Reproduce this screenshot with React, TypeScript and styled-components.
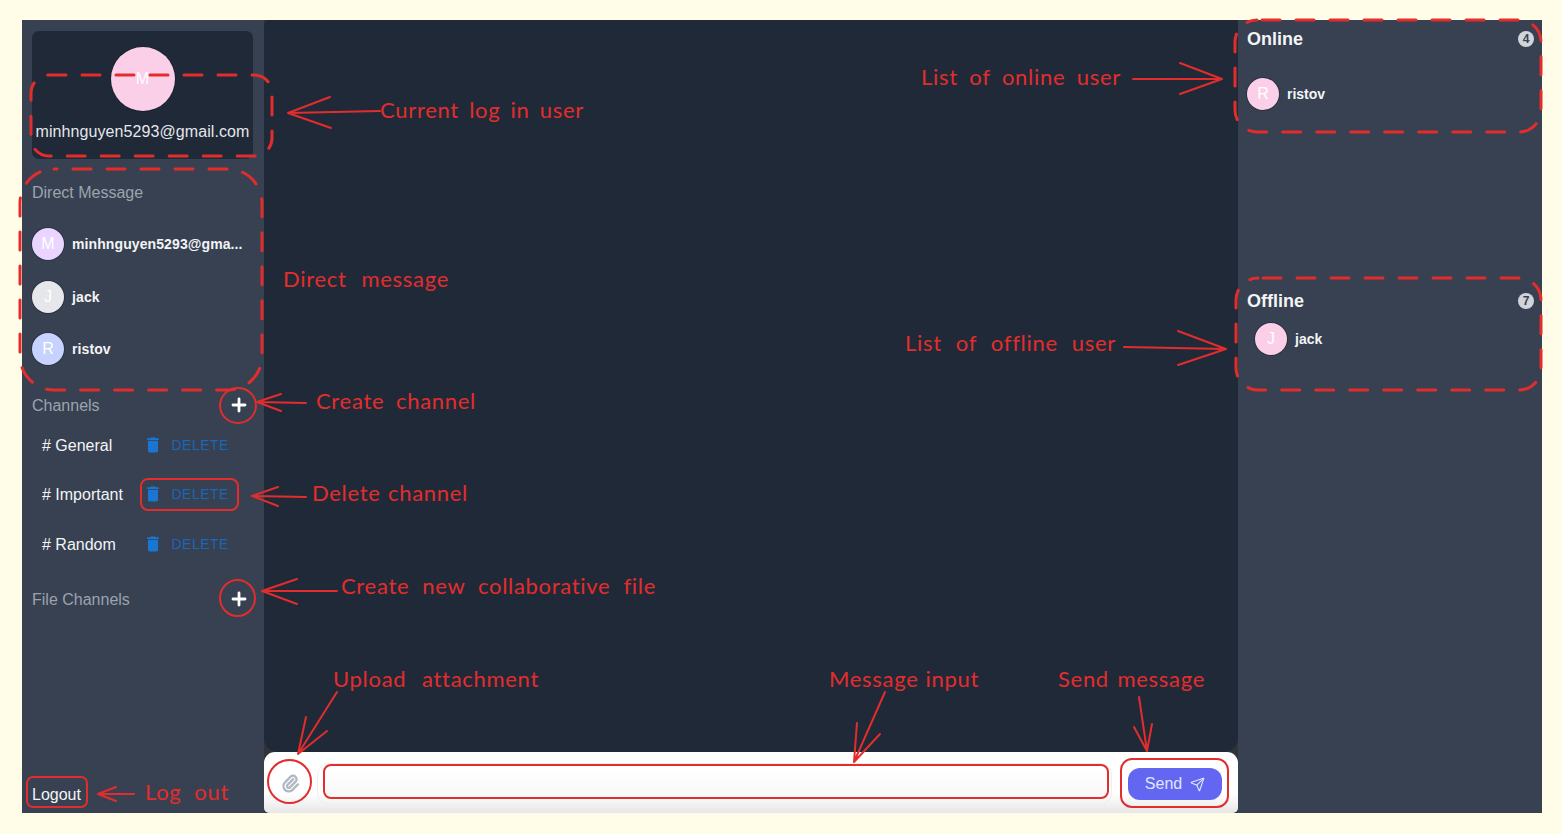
import React from "react";
import styled, { createGlobalStyle } from "styled-components";
import { HiOutlinePaperClip } from "react-icons/hi";
import { Send as SendIcon } from "lucide-react";

const Global = createGlobalStyle`
  html, body { margin: 0; padding: 0; background: #fffde8; }
  * { box-sizing: border-box; }
`;

const Page = styled.div`
  position: relative;
  width: 1562px;
  height: 834px;
  padding: 20px 20px 21px 22px;
  overflow: hidden;
  font-family: "Liberation Sans", Arial, sans-serif;
  background: #fffde8;
`;

const Shell = styled.div`
  display: grid;
  grid-template-columns: 242px 974px 304px;
  height: 793px;
  background: #374151;
`;

const Sidebar = styled.aside`
  display: flex;
  flex-direction: column;
  padding: 11px 11px 6px 10px;
  background: #374151;
`;

const ProfileCard = styled.div`
  display: flex;
  flex-direction: column;
  align-items: center;
  height: 128px;
  padding-top: 16px;
  border-radius: 7px;
  background: #1f2937;
`;

const Avatar = styled.div<{ $color: string; $size?: number }>`
  display: flex;
  align-items: center;
  justify-content: center;
  flex: none;
  width: ${(p) => p.$size ?? 32}px;
  height: ${(p) => p.$size ?? 32}px;
  border-radius: 50%;
  background: ${(p) => p.$color};
  color: #fff;
  font-size: 16px;
  font-weight: 400;
  box-shadow: 0 0 0 1px rgba(17, 24, 39, 0.35);
`;

const Email = styled.div`
  margin-top: 9px;
  color: #e5e7eb;
  font-size: 16px;
  line-height: 24px;
  letter-spacing: 0.08px;
  white-space: nowrap;
`;

const SectionLabel = styled.div`
  color: #9ca3af;
  font-size: 16px;
  line-height: 24px;
  transform: translateY(1px);
`;

const DirectLabel = styled(SectionLabel)`
  margin-top: 21px;
`;

const DirectList = styled.div`
  display: flex;
  flex-direction: column;
  margin-top: 14px;
`;

const UserRow = styled.div<{ $indent?: number }>`
  display: flex;
  align-items: center;
  gap: 8px;
  min-height: 32px;
  padding-left: ${(p) => p.$indent ?? 0}px;
  color: #f3f4f6;
  font-size: 14px;
  font-weight: 700;
`;

const DirectRow = styled(UserRow)`
  height: 52.5px;
`;

const UserName = styled.span`
  letter-spacing: 0.1px;
  white-space: nowrap;
`;

const GroupHeader = styled.div<{ $top: number }>`
  display: flex;
  align-items: center;
  justify-content: space-between;
  height: 30px;
  margin-top: ${(p) => p.$top}px;
`;

const AddButton = styled.button`
  display: flex;
  align-items: center;
  justify-content: center;
  width: 28px;
  height: 28px;
  padding: 0;
  border: 0;
  background: transparent;
`;

const ChannelList = styled.div`
  display: flex;
  flex-direction: column;
`;

const ChannelRow = styled.div`
  display: grid;
  grid-template-columns: 100.5px auto;
  align-items: center;
  height: 49.5px;
  padding-left: 10px;
  color: #f3f4f6;
  font-size: 16px;
`;

const ChannelName = styled.span`
  transform: translateY(1px);
`;

const DeleteButton = styled.button`
  display: flex;
  align-items: center;
  gap: 9px;
  width: fit-content;
  padding: 0;
  border: 0;
  background: transparent;
  color: #1976d2;
  font-family: inherit;
  font-size: 14px;
  letter-spacing: 0.5px;
`;

const DeleteText = styled.span`
  color: #1a66b8;
`;

const Logout = styled.button`
  align-self: flex-start;
  margin-top: auto;
  padding: 0;
  border: 0;
  background: transparent;
  color: #f3f4f6;
  font-family: inherit;
  font-size: 16px;
  line-height: 24px;
`;

const Center = styled.main`
  display: flex;
  flex-direction: column;
  background: #30343a;
`;

const Messages = styled.div`
  flex: 1;
  border-radius: 5px 0 14px 14px;
  background: #1f2937;
`;

const Composer = styled.form`
  display: flex;
  align-items: center;
  height: 61px;
  padding: 0 10px 0 8px;
  border-radius: 11px 11px 5px 5px;
  background: linear-gradient(#ffffff 68%, #e7e7e7);
`;

const AttachButton = styled.button`
  display: flex;
  align-items: center;
  justify-content: center;
  flex: none;
  width: 36px;
  height: 36px;
  margin-top: 2px;
  padding: 0;
  border: 0;
  background: transparent;
  color: #b1b7c3;
`;

const Field = styled.div`
  flex: 1;
  height: 42px;
  margin: 3px 0 0 9px;
  padding: 5px 5px 5px 8px;
  border: 1px solid #eeeeee;
  border-radius: 12px;
`;

const MessageInput = styled.input`
  display: block;
  width: 100%;
  height: 30px;
  border: 0;
  outline: 0;
  background: linear-gradient(#ffffff, #f7f7f7);
`;

const SendButton = styled.button`
  display: flex;
  align-items: center;
  justify-content: center;
  gap: 8px;
  flex: none;
  width: 94px;
  height: 32px;
  margin: 3px 6px 0 16px;
  padding: 0;
  border: 0;
  border-radius: 12px;
  background: #6366f1;
  color: #e0e7ff;
  font-family: inherit;
  font-size: 16px;
`;

const RightPanel = styled.aside`
  display: flex;
  flex-direction: column;
  padding: 5px 8px 0 9px;
  background: #374151;
`;

const PanelHeader = styled.div<{ $top?: number }>`
  display: flex;
  align-items: center;
  justify-content: space-between;
  height: 28px;
  margin-top: ${(p) => p.$top ?? 0}px;
  color: #f3f4f6;
  font-size: 18px;
  font-weight: 700;
`;

const CountBadge = styled.span`
  display: flex;
  align-items: center;
  justify-content: center;
  width: 16px;
  height: 16px;
  border-radius: 50%;
  background: #d1d5db;
  color: #374151;
  font-size: 12px;
  font-weight: 700;
`;

const PanelList = styled.div<{ $top: number }>`
  margin-top: ${(p) => p.$top}px;
`;

const Overlay = styled.div`
  position: absolute;
  inset: 0;
  pointer-events: none;
`;

const Sketch = styled.svg`
  display: block;
  fill: none;
  stroke: #e32d2d;
  stroke-linecap: round;
  stroke-linejoin: round;
`;

const Note = styled.span<{ $x: number; $y: number; $w: number }>`
  position: absolute;
  left: ${(p) => p.$x}px;
  top: ${(p) => p.$y - 15}px;
  width: ${(p) => p.$w}px;
  height: 28px;
  color: #e32d2d;
  font-family: Lato, "Liberation Sans", sans-serif;
  font-size: 22px;
  font-weight: 400;
  line-height: 28px;
  letter-spacing: 0.7px;
  white-space: nowrap;
  text-align: justify;
  text-align-last: justify;
`;

const Plus = () => (
  <svg width="16" height="16" viewBox="0 0 16 16" aria-hidden="true">
    <path d="M8 2v12M2 8h12" stroke="#fff" strokeWidth="2.8" strokeLinecap="round" />
  </svg>
);

const Trash = () => (
  <svg width="20" height="20" viewBox="0 0 24 24" fill="currentColor" aria-hidden="true">
    <path d="M6 19c0 1.1.9 2 2 2h8c1.1 0 2-.9 2-2V7H6v12zM19 4h-3.5l-1-1h-5l-1 1H5v2h14V4z" />
  </svg>
);

const directUsers = [
  { name: "minhnguyen5293@gma...", initial: "M", color: "#e9d5ff" },
  { name: "jack", initial: "J", color: "#e5e7eb" },
  { name: "ristov", initial: "R", color: "#c7d2fe" },
];

const channels = ["General", "Important", "Random"];

const notes = [
  { text: "Current log in user", x: 380, y: 111, w: 204 },
  { text: "Direct message", x: 283, y: 280, w: 166 },
  { text: "Create channel", x: 316, y: 402, w: 160 },
  { text: "Delete channel", x: 312, y: 494, w: 156 },
  { text: "Create new collaborative file", x: 341, y: 587, w: 315 },
  { text: "Upload attachment", x: 333, y: 680, w: 206 },
  { text: "Log out", x: 145, y: 793, w: 84 },
  { text: "List of online user", x: 921, y: 78, w: 200 },
  { text: "List of offline user", x: 905, y: 344, w: 211 },
  { text: "Message input", x: 829, y: 680, w: 150 },
  { text: "Send message", x: 1058, y: 680, w: 147 },
];

const arrows = [
  "M380 111 L288 113 M330 97 L288 113 L331 128",
  "M306 403 L257 402 M281 394 L257 402 L281 411",
  "M306 497 L252 496 M278 487 L252 496 L278 506",
  "M337 591 L262 591 M297 579 L262 591 L297 604",
  "M134 794 L98 794 M116 787 L98 794 L116 801",
  "M337 692 L298 754 M306 717 L298 754 L327 731",
  "M1133 79 L1222 79 M1180 63 L1222 79 L1180 94",
  "M1124 347 L1226 349 M1178 331 L1226 349 L1178 365",
  "M885 692 L854 762 M857 723 L854 762 L880 734",
  "M1139 697 L1147 751 M1134 727 L1147 751 L1152 724",
];

const dashed = [
  { x: 31, y: 75, w: 241, h: 81, r: 18, o: 1 },
  { x: 20, y: 169, w: 242, h: 221, r: 34, o: 15 },
  { x: 1235, y: 20, w: 306, h: 112, r: 22, o: 29 },
  { x: 1236, y: 278, w: 305, h: 112, r: 22, o: 29 },
];

const outlines = [
  { x: 141, y: 479, w: 97, h: 31, r: 7 },
  { x: 27, y: 777, w: 60, h: 30, r: 6 },
  { x: 324, y: 765, w: 784, h: 33, r: 7 },
  { x: 1121, y: 759, w: 107, h: 48, r: 11 },
  { x: 220, y: 388, w: 36, h: 35, r: 18 },
  { x: 220, y: 580, w: 35, h: 36, r: 18 },
  { x: 268, y: 760, w: 43, h: 43, r: 22 },
];

export default function App() {
  return (
    <Page>
      <Global />
      <Shell>
        <Sidebar>
          <ProfileCard>
            <Avatar $color="#fbcfe8" $size={64}>M</Avatar>
            <Email>minhnguyen5293@gmail.com</Email>
          </ProfileCard>
          <DirectLabel>Direct Message</DirectLabel>
          <DirectList>
            {directUsers.map((u) => (
              <DirectRow key={u.name}>
                <Avatar $color={u.color}>{u.initial}</Avatar>
                <UserName>{u.name}</UserName>
              </DirectRow>
            ))}
          </DirectList>
          <GroupHeader $top={14.5}>
            <SectionLabel>Channels</SectionLabel>
            <AddButton aria-label="Create channel"><Plus /></AddButton>
          </GroupHeader>
          <ChannelList>
            {channels.map((c) => (
              <ChannelRow key={c}>
                <ChannelName># {c}</ChannelName>
                <DeleteButton><Trash /><DeleteText>DELETE</DeleteText></DeleteButton>
              </ChannelRow>
            ))}
          </ChannelList>
          <GroupHeader $top={15.5}>
            <SectionLabel>File Channels</SectionLabel>
            <AddButton aria-label="Create file"><Plus /></AddButton>
          </GroupHeader>
          <Logout>Logout</Logout>
        </Sidebar>
        <Center>
          <Messages />
          <Composer>
            <AttachButton aria-label="Upload attachment"><HiOutlinePaperClip size={21} strokeWidth={2.6} /></AttachButton>
            <Field><MessageInput aria-label="Message" /></Field>
            <SendButton type="button">Send <SendIcon size={15} strokeWidth={1.8} /></SendButton>
          </Composer>
        </Center>
        <RightPanel>
          <PanelHeader>Online<CountBadge>4</CountBadge></PanelHeader>
          <PanelList $top={25}>
            <UserRow><Avatar $color="#fbcfe8">R</Avatar>ristov</UserRow>
          </PanelList>
          <PanelHeader $top={177}>Offline<CountBadge>7</CountBadge></PanelHeader>
          <PanelList $top={8}>
            <UserRow $indent={8}><Avatar $color="#fbcfe8">J</Avatar>jack</UserRow>
          </PanelList>
        </RightPanel>
      </Shell>
      <Overlay>
        <Sketch width="1562" height="834" viewBox="0 0 1562 834" aria-hidden="true">
          {dashed.map((d) => (
            <rect key={d.x + "-" + d.y} x={d.x} y={d.y} width={d.w} height={d.h} rx={d.r} strokeWidth="3" strokeDasharray="18 16" strokeDashoffset={d.o} />
          ))}
          {outlines.map((o) => (
            <rect key={o.x + "-" + o.y} x={o.x} y={o.y} width={o.w} height={o.h} rx={o.r} strokeWidth="2" />
          ))}
          {arrows.map((a) => (
            <path key={a} d={a} strokeWidth="2" />
          ))}
        </Sketch>
        {notes.map((n) => (
          <Note key={n.text} $x={n.x} $y={n.y} $w={n.w}>{n.text}</Note>
        ))}
      </Overlay>
    </Page>
  );
}
